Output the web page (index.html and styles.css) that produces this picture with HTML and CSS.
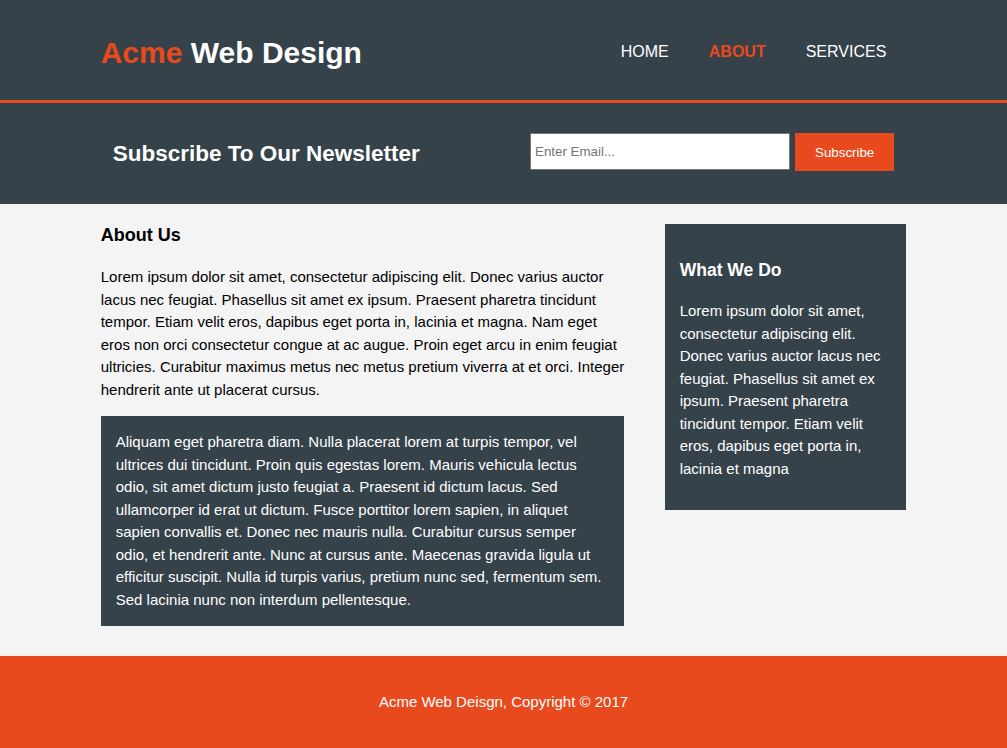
FILE: index.html
```html
<!DOCTYPE html>
<html lang="en">
<head>
<meta charset="utf-8">
<title>Acme Web Design | About</title>
<link rel="stylesheet" href="styles.css">
</head>
<body>
<header class="site-header">
  <div class="container header-inner">
    <div class="branding">
      <h1><span class="highlight">Acme</span> Web Design</h1>
    </div>
    <nav>
      <ul class="nav-list">
        <li><a href="#">Home</a></li>
        <li class="current"><a href="#">About</a></li>
        <li><a href="#">Services</a></li>
      </ul>
    </nav>
  </div>
</header>

<section class="newsletter">
  <div class="container newsletter-inner">
    <h1>Subscribe To Our Newsletter</h1>
    <form class="subscribe-form">
      <input type="email" placeholder="Enter Email...">
      <button type="submit" class="button-1">Subscribe</button>
    </form>
  </div>
</section>

<section class="container main">
  <article class="main-col">
    <h1 class="page-title">About Us</h1>
    <p>Lorem ipsum dolor sit amet, consectetur adipiscing elit. Donec varius auctor lacus nec feugiat. Phasellus sit amet ex ipsum. Praesent pharetra tincidunt tempor. Etiam velit eros, dapibus eget porta in, lacinia et magna. Nam eget eros non orci consectetur congue at ac augue. Proin eget arcu in enim feugiat ultricies. Curabitur maximus metus nec metus pretium viverra at et orci. Integer hendrerit ante ut placerat cursus.</p>
    <div class="dark">Aliquam eget pharetra diam. Nulla placerat lorem at turpis tempor, vel ultrices dui tincidunt. Proin quis egestas lorem. Mauris vehicula lectus odio, sit amet dictum justo feugiat a. Praesent id dictum lacus. Sed ullamcorper id erat ut dictum. Fusce porttitor lorem sapien, in aliquet sapien convallis et. Donec nec mauris nulla. Curabitur cursus semper odio, et hendrerit ante. Nunc at cursus ante. Maecenas gravida ligula ut efficitur suscipit. Nulla id turpis varius, pretium nunc sed, fermentum sem. Sed lacinia nunc non interdum pellentesque.</div>
  </article>
  <aside class="sidebar">
    <div class="dark">
      <h3>What We Do</h3>
      <p>Lorem ipsum dolor sit amet, consectetur adipiscing elit. Donec varius auctor lacus nec feugiat. Phasellus sit amet ex ipsum. Praesent pharetra tincidunt tempor. Etiam velit eros, dapibus eget porta in, lacinia et magna</p>
    </div>
  </aside>
</section>

<footer class="site-footer">
  <p>Acme Web Deisgn, Copyright &copy; 2017</p>
</footer>
</body>
</html>
```

FILE: styles.css
```css
body {
  font: 15px/1.5 "Liberation Sans", Arial, Helvetica, sans-serif;
  padding: 0;
  margin: 0;
  background-color: #f4f4f4;
}

.container {
  width: 80%;
  margin: 0 auto;
}

/* Header */
.site-header {
  background: #35424a;
  color: #ffffff;
  padding-top: 30px;
  min-height: 70px;
  border-bottom: 3px solid #e8491d;
}

.header-inner {
  display: flex;
  justify-content: space-between;
  align-items: flex-start;
}

.branding h1 {
  margin: 0;
  font-size: 30px;
  line-height: 45px;
}

.highlight {
  color: #e8491d;
}

.nav-list {
  list-style: none;
  margin: 10px 0 0;
  padding: 0;
  display: flex;
}

.nav-list li {
  padding: 0 20px;
}

.nav-list a {
  color: #ffffff;
  text-decoration: none;
  text-transform: uppercase;
  font-size: 16px;
  line-height: 24px;
}

.nav-list .current a {
  color: #e8491d;
  font-weight: bold;
}

/* Newsletter */
.newsletter {
  padding: 15px;
  color: #ffffff;
  background: #35424a;
}

.newsletter-inner {
  display: flex;
  justify-content: space-between;
  align-items: center;
  min-height: 71px;
}

.newsletter-inner h1 {
  margin: 0;
  font-size: 22.5px;
  line-height: 34px;
}

.subscribe-form {
  display: flex;
  align-items: flex-start;
  gap: 5px;
  align-self: flex-start;
  margin: 15px 0 0;
}

.subscribe-form input {
  box-sizing: border-box;
  width: 260px;
  height: 37px;
  padding: 4px;
  border: 1px solid #767676;
  font: 13.33px "Liberation Sans", Arial, sans-serif;
  color: #000;
  background: #fff;
}

.subscribe-form input::placeholder {
  color: #757575;
}

.button-1 {
  height: 38px;
  background: #e8491d;
  border: 0;
  padding: 0 20px;
  color: #ffffff;
  font: 13.33px "Liberation Sans", Arial, sans-serif;
}

/* Main */
.main {
  display: flex;
  justify-content: space-between;
  align-items: flex-start;
}

.main-col {
  width: 65%;
}

.page-title {
  margin: 18px 0 17px;
  font-size: 18px;
  line-height: 27px;
}

.main-col p {
  margin: 0 0 15px;
}

.dark {
  padding: 15px;
  background: #35424a;
  color: #ffffff;
}

.main-col .dark {
  margin-bottom: 10px;
}

.sidebar {
  width: 30%;
  margin-top: 20px;
}

.sidebar h3 {
  font-size: 17.55px;
  line-height: 26.3px;
  margin: 17.55px 0;
}

.sidebar p {
  margin: 0 0 15px;
}

/* Footer */
.site-footer {
  padding: 20px;
  margin-top: 20px;
  color: #ffffff;
  background-color: #e8491d;
  text-align: center;
}

.site-footer p {
  margin: 15px 0;
}
```
